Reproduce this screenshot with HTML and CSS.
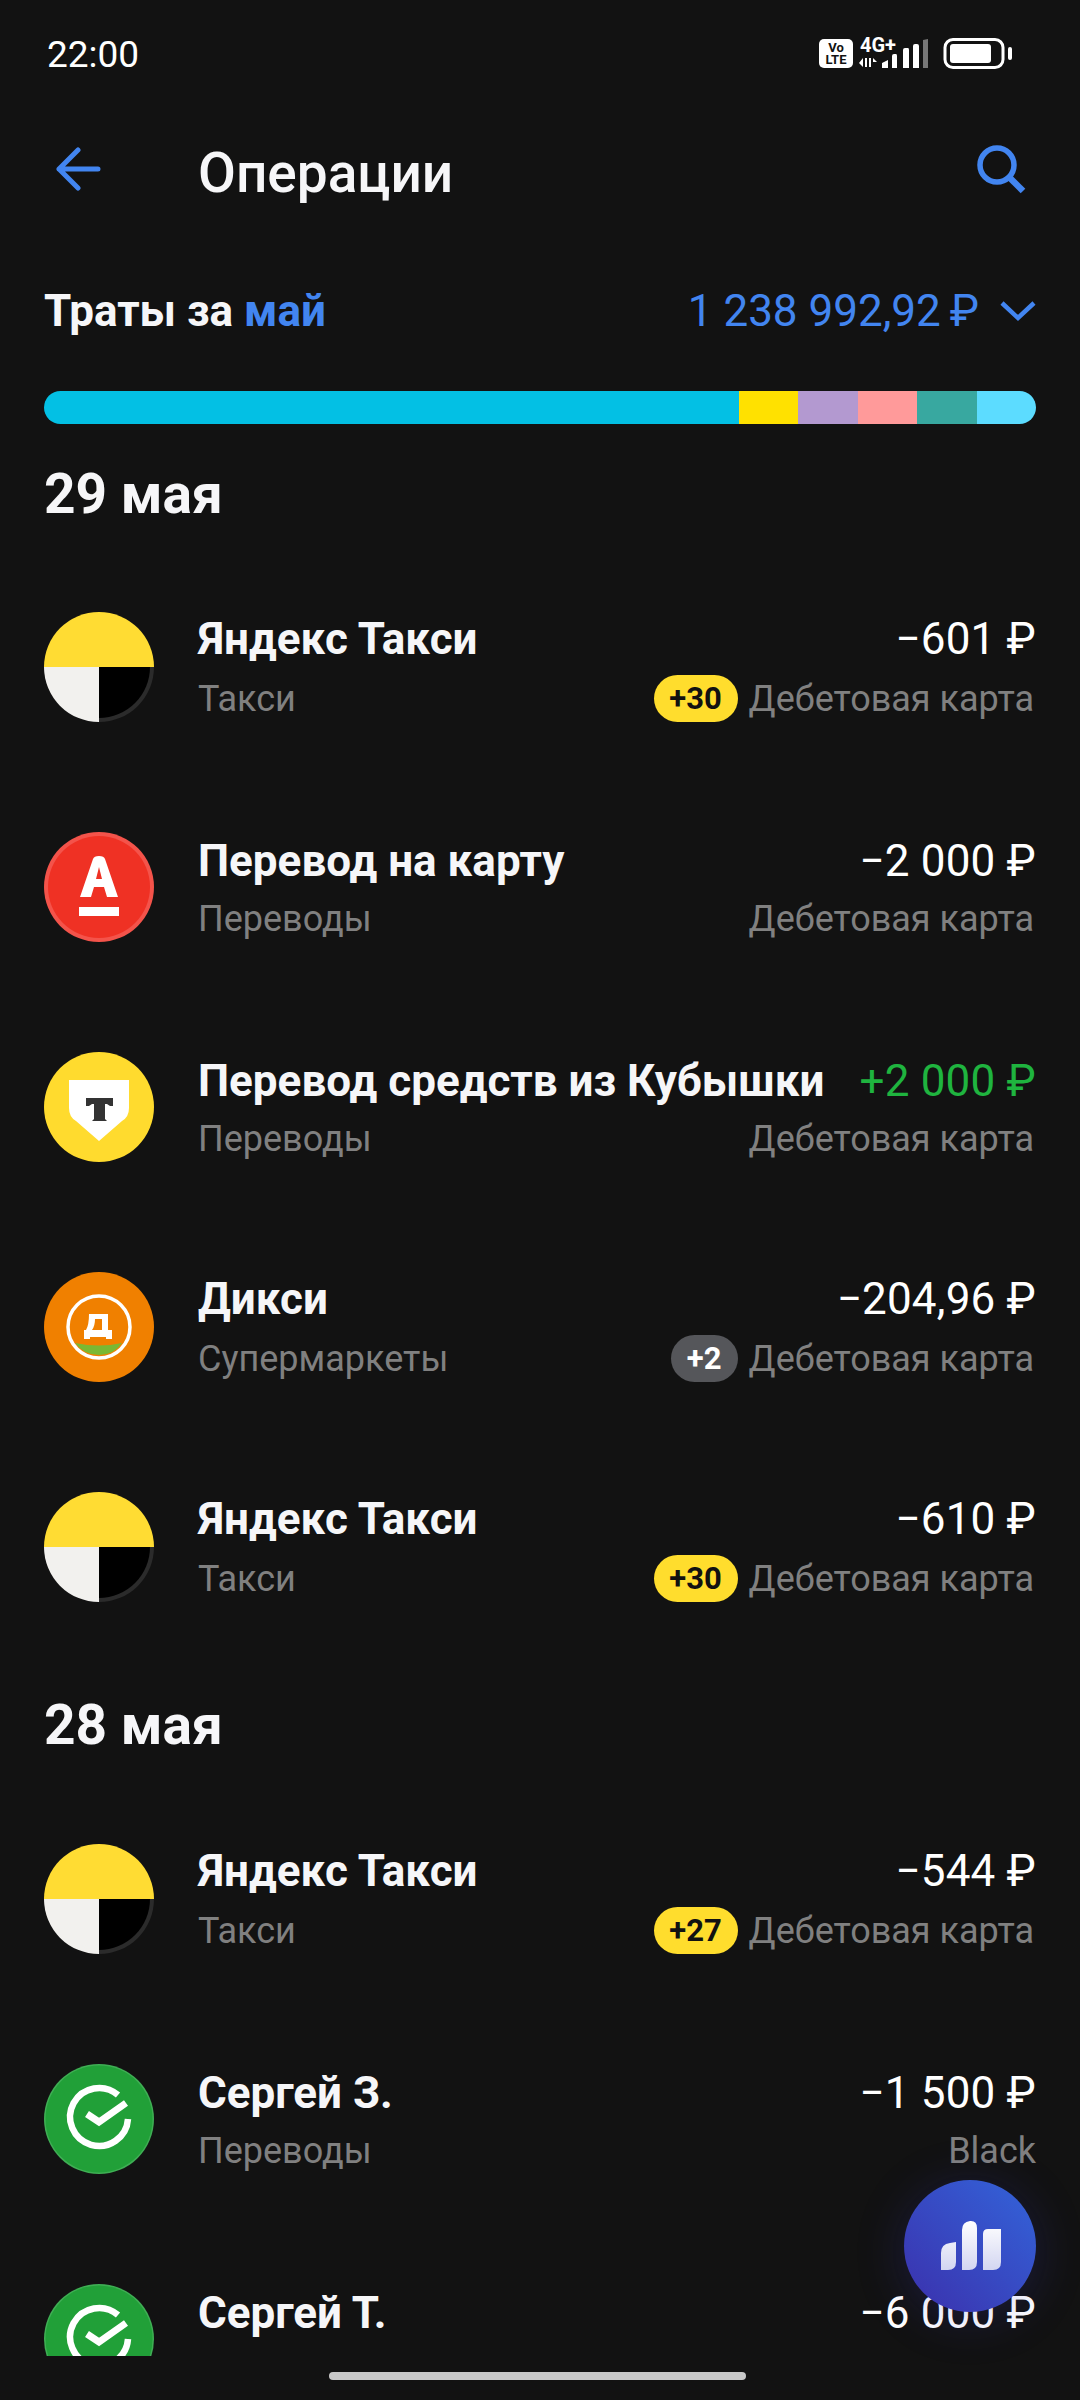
FILE: index.html
```html
<!DOCTYPE html>
<html lang="ru">
<head>
    <meta charset="UTF-8">
    <meta name="viewport" content="width=device-width, initial-scale=1.0">
    <title>Операции</title>
    <link rel="stylesheet" href="styles.css">
</head>
<body>
    <svg class="defs" width="0" height="0">
        <symbol id="i-yandex" viewBox="0 0 110 110">
            <path d="M0 55a55 55 0 0 1 110 0z" fill="#ffdc33"/>
            <path d="M0 55h55v55A55 55 0 0 1 0 55z" fill="#f2f1ee"/>
            <path d="M55 55h55a55 55 0 0 1-55 55z" fill="#2b2b2b"/>
            <path d="M55 55h51a51 51 0 0 1-51 51z" fill="#000"/>
        </symbol>
        <symbol id="i-alfa" viewBox="0 0 110 110">
            <circle cx="55" cy="55" r="55" fill="#f4534a"/>
            <circle cx="55" cy="55" r="51" fill="#ef3124"/>
            <path fill="#fff" fill-rule="evenodd" d="M49 27q1-3 6-3t6 3l13 38H63l-3-10H50l-3 10H36zM55 35l-3 12h6z"/>
            <rect x="35" y="75" width="40" height="9" fill="#fff"/>
        </symbol>
        <symbol id="i-kopilka" viewBox="0 0 110 110">
            <circle cx="55" cy="55" r="55" fill="#ffdb2e"/>
            <path d="M25 28h60v28q0 9-7 13L55 89 32 69q-7-4-7-13z" fill="#fff"/>
            <path d="M42 46h27v8h-3l-3-2h-2v15l2 2h-15l2-2V52h-2l-3 2h-3z" fill="#333"/>
        </symbol>
        <symbol id="i-dixy" viewBox="0 0 110 110">
            <circle cx="55" cy="55" r="55" fill="#f08000"/>
            <circle cx="55" cy="55" r="31" fill="none" stroke="#fff" stroke-width="3.5"/>
            <path fill="#fff" fill-rule="evenodd" d="M45 42h19v16h4v9h-6v-2H46v2h-6v-9h2q3-5 3-16zM51 47q0 7-3 11h10V47z"/>
            <path d="M31 71q24 5 47 0-8 12-23 12T31 71z" fill="#7ab833"/>
        </symbol>
        <symbol id="i-sber" viewBox="0 0 110 110">
            <circle cx="55" cy="55" r="55" fill="#3fae54"/>
            <circle cx="55" cy="55" r="53.5" fill="#21a038"/>
            <path d="M74 31A29 29 0 1 0 84 55" fill="none" stroke="#fff" stroke-width="6.5"/>
            <path d="M43 50l12 8 27-19" fill="none" stroke="#fff" stroke-width="7"/>
        </symbol>
    </svg>

    <div class="page">
        <div class="status">
            <span class="time">22:00</span>
            <svg class="status-icons" width="196" height="44" viewBox="0 -5 196 44">
                <rect x="1" y="2" width="34" height="29" rx="5" fill="#fff"/>
                <text x="18" y="14.5" class="volte">Vo</text>
                <text x="18" y="27" class="volte">LTE</text>
                <text x="42" y="15" class="fourg">4G+</text>
                <path d="M45 21v9l-4-4zM47 21h2v9h-2zM51 21h2v9h-2zM55 21l4 4h-4z" fill="#fff"/>
                <path d="M64 31v-5l6-3v8zM74 31V19q0-2 2-2h2q1 0 1 2v12zM85 31V13q0-2 2-2h3q1 0 1 2v18zM95 31V9q0-2 2-2h2q2 0 2 2v22z" fill="#fff"/>
                <path d="M105 31V3l5-1v29z" fill="#777"/>
                <rect x="127" y="2.5" width="58" height="28" rx="8" fill="none" stroke="#fff" stroke-width="3"/>
                <rect x="132" y="7" width="41" height="19" rx="3" fill="#fff"/>
                <rect x="190" y="10" width="4" height="13" rx="2" fill="#fff"/>
            </svg>
        </div>

        <div class="toolbar">
            <svg class="back" width="46" height="46" viewBox="0 0 46 46">
                <path d="M22 3L3 22l19 19M3 22h39" fill="none" stroke="#4285f0" stroke-width="5" stroke-linecap="round" stroke-linejoin="round"/>
            </svg>
            <h1 class="title">Операции</h1>
            <svg class="search" width="52" height="50" viewBox="0 0 52 50">
                <circle cx="22" cy="20" r="17" fill="none" stroke="#4285f0" stroke-width="5.5"/>
                <path d="M34 32l14 14" fill="none" stroke="#4285f0" stroke-width="6.5"/>
            </svg>
        </div>

        <div class="summary">
            <div class="summary-label">Траты за <span class="blue">май</span></div>
            <div class="summary-sum">
                <span class="blue">1 238 992,92&#8201;₽</span>
                <svg width="36" height="22" viewBox="0 0 36 22">
                    <path d="M2 3l16 15L34 3" fill="none" stroke="#4285f0" stroke-width="4.5"/>
                </svg>
            </div>
        </div>

        <div class="spend-bar">
            <div class="seg seg-main"></div>
            <div class="seg seg-yellow"></div>
            <div class="seg seg-lilac"></div>
            <div class="seg seg-pink"></div>
            <div class="seg seg-teal"></div>
            <div class="seg seg-sky"></div>
        </div>

        <div class="list">
            <h2 class="date date-first">29 мая</h2>

            <div class="row">
                <svg class="logo"><use href="#i-yandex"/></svg>
                <div class="lines">
                    <div class="line"><span class="name">Яндекс Такси</span><span class="amount">−601 ₽</span></div>
                    <div class="line sub"><span>Такси</span><span class="card"><span class="chip">+30</span>Дебетовая карта</span></div>
                </div>
            </div>
            <div class="row row-transfer">
                <svg class="logo"><use href="#i-alfa"/></svg>
                <div class="lines">
                    <div class="line"><span class="name">Перевод на карту</span><span class="amount">−2 000 ₽</span></div>
                    <div class="line sub"><span>Переводы</span><span class="card">Дебетовая карта</span></div>
                </div>
            </div>
            <div class="row row-transfer">
                <svg class="logo"><use href="#i-kopilka"/></svg>
                <div class="lines">
                    <div class="line"><span class="name">Перевод средств из Кубышки</span><span class="amount green">+2 000 ₽</span></div>
                    <div class="line sub"><span>Переводы</span><span class="card">Дебетовая карта</span></div>
                </div>
            </div>
            <div class="row">
                <svg class="logo"><use href="#i-dixy"/></svg>
                <div class="lines">
                    <div class="line"><span class="name">Дикси</span><span class="amount">−204,96 ₽</span></div>
                    <div class="line sub"><span>Супермаркеты</span><span class="card"><span class="chip chip-gray">+2</span>Дебетовая карта</span></div>
                </div>
            </div>
            <div class="row">
                <svg class="logo"><use href="#i-yandex"/></svg>
                <div class="lines">
                    <div class="line"><span class="name">Яндекс Такси</span><span class="amount">−610 ₽</span></div>
                    <div class="line sub"><span>Такси</span><span class="card"><span class="chip">+30</span>Дебетовая карта</span></div>
                </div>
            </div>

            <h2 class="date">28 мая</h2>

            <div class="row">
                <svg class="logo"><use href="#i-yandex"/></svg>
                <div class="lines">
                    <div class="line"><span class="name">Яндекс Такси</span><span class="amount">−544 ₽</span></div>
                    <div class="line sub"><span>Такси</span><span class="card"><span class="chip">+27</span>Дебетовая карта</span></div>
                </div>
            </div>
            <div class="row row-transfer">
                <svg class="logo"><use href="#i-sber"/></svg>
                <div class="lines">
                    <div class="line"><span class="name">Сергей З.</span><span class="amount">−1 500 ₽</span></div>
                    <div class="line sub"><span>Переводы</span><span>Black</span></div>
                </div>
            </div>
            <div class="row row-transfer">
                <svg class="logo"><use href="#i-sber"/></svg>
                <div class="lines">
                    <div class="line"><span class="name">Сергей Т.</span><span class="amount">−6 000 ₽</span></div>
                    <div class="line sub"></div>
                </div>
            </div>
        </div>

        <div class="navbar"><div class="pill"></div></div>

        <div class="fab">
            <svg width="62" height="50" viewBox="0 0 62 50">
                <defs>
                    <linearGradient id="fab-bars" x1="0" y1="0" x2="0" y2="1">
                        <stop offset="0" stop-color="#fff"/>
                        <stop offset="1" stop-color="#d3d6f1"/>
                    </linearGradient>
                </defs>
                <path d="M1 49V32q0-9 9-10l6-1v20q0 8-8 8zM22 49V9q0-8 8-9h1q6 0 6 7v34q0 8-8 8zM43 49V13q0-5 5-5l13-0v33q0 8-8 8z" fill="url(#fab-bars)"/>
            </svg>
        </div>
    </div>
</body>
</html>
```

FILE: styles.css
```css
*{
    margin: 0;
    padding: 0;
    box-sizing: border-box;
}
body{
    background-color: #121212;
    font-family: Roboto, "Noto Sans", sans-serif;
    color: #fff;
}
.defs{
    position: absolute;
}
.page{
    width: 1080px;
    height: 2400px;
    display: flex;
    flex-direction: column;
    position: relative;
    overflow: hidden;
    background-color: #121212;
}
.blue{
    color: #4285f0;
}
.green{
    color: #1fb43f;
}

/* status bar */
.status{
    height: 108px;
    padding: 0 66px 0 47px;
    display: flex;
    align-items: center;
    justify-content: space-between;
    flex-shrink: 0;
}
.time{
    font-size: 37px;
    padding-top: 1px;
}
.volte{
    font: 700 13px Roboto, sans-serif;
    text-anchor: middle;
    fill: #121212;
}
.fourg{
    font: 700 20px Roboto, sans-serif;
    fill: #fff;
}

/* toolbar */
.toolbar{
    height: 124px;
    padding: 0 53px 0 56px;
    display: flex;
    align-items: center;
    flex-shrink: 0;
}
.title{
    font-size: 55px;
    font-weight: 500;
    margin-left: 96px;
    padding-top: 6px;
    color: #f6f6f8;
}
.search{
    margin-left: auto;
}

/* spend summary */
.summary{
    height: 158px;
    padding: 0 44px 0 44px;
    display: flex;
    justify-content: space-between;
    align-items: center;
    flex-shrink: 0;
}
.summary-label{
    font-size: 44px;
    font-weight: 700;
    color: #f6f6f8;
}
.summary-sum{
    display: flex;
    align-items: center;
    gap: 21px;
    font-size: 44px;
}
.spend-bar{
    height: 33px;
    margin: 0 44px;
    margin-top: 1px;
    display: flex;
    border-radius: 17px;
    overflow: hidden;
    flex-shrink: 0;
}
.seg{
    flex: 1;
}
.seg-main{
    flex: none;
    width: 695px;
    background-color: #03c0e4;
}
.seg-yellow{
    background-color: #ffe100;
}
.seg-lilac{
    background-color: #b399d0;
}
.seg-pink{
    background-color: #ff9a9a;
}
.seg-teal{
    background-color: #38a8a0;
}
.seg-sky{
    background-color: #5cdcff;
}

/* operations */
.list{
    flex: 1;
    min-height: 0;
    overflow: hidden;
    margin-top: 24px;
}
.date{
    height: 132px;
    padding: 3px 44px 0;
    display: flex;
    align-items: center;
    font-size: 55px;
    font-weight: 700;
    color: #f6f6f8;
}
.date-first{
    height: 109px;
    padding-top: 0;
    padding-bottom: 33px;
    align-items: flex-end;
    line-height: 60px;
}
.row{
    height: 220px;
    padding: 0 44px;
    display: flex;
    align-items: center;
}
.logo{
    width: 110px;
    height: 110px;
    flex-shrink: 0;
}
.lines{
    flex: 1;
    margin-left: 44px;
    padding-top: 3px;
}
.line{
    display: flex;
    justify-content: space-between;
    align-items: center;
    height: 60px;
    white-space: nowrap;
}
.row-transfer .line:first-child{
    padding-top: 4px;
}
.name{
    font-size: 44px;
    font-weight: 700;
    color: #f6f6f8;
}
.amount{
    font-size: 44px;
    letter-spacing: 0.2px;
}
.sub{
    font-size: 36px;
    color: #808080;
}
.card{
    margin-right: 2px;
}
.chip{
    display: inline-block;
    width: 84px;
    height: 47px;
    line-height: 47px;
    margin-right: 11px;
    border-radius: 24px;
    background-color: #ffdd2d;
    color: #111;
    font-size: 31px;
    font-weight: 700;
    text-align: center;
    vertical-align: 2px;
}
.chip-gray{
    width: 67px;
    background-color: #55565a;
    color: #fff;
}

/* bottom */
.navbar{
    height: 44px;
    display: flex;
    justify-content: center;
    padding-top: 16px;
    flex-shrink: 0;
}
.pill{
    width: 417px;
    height: 8px;
    margin-left: -5px;
    border-radius: 4px;
    background-color: #c8c8c8;
}
.fab{
    position: absolute;
    left: 904px;
    top: 2180px;
    width: 132px;
    height: 132px;
    padding: 41px 0 0 36px;
    border-radius: 50%;
    background: linear-gradient(to top right, #3b30ac, #3364da);
    box-shadow: 0 6px 50px rgba(60, 60, 210, 0.22);
}
```
